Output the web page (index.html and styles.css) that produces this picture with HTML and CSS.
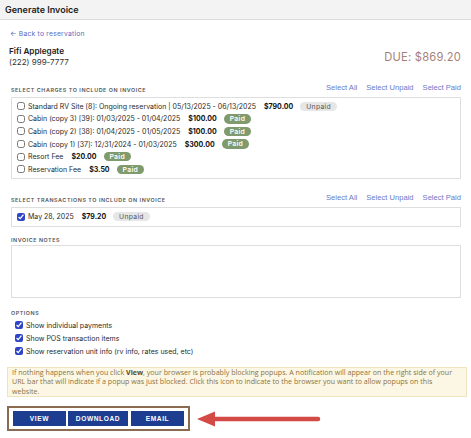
FILE: index.html
```html
<!DOCTYPE html>
<html lang="en">
<head>
  <meta charset="UTF-8">
  <title>Generate Invoice</title>
  <link rel="stylesheet" href="styles.css">
</head>
<body>

  <div class="topbar">Generate Invoice</div>

  <div class="page">
    <a class="back-link" href="#">&#8592; Back to reservation</a>

    <div class="guest-row">
      <div class="guest">
        <div class="guest-name">Fifi Applegate</div>
        <div class="guest-phone">(222) 999-7777</div>
      </div>
      <div class="due">DUE: $869.20</div>
    </div>

    <div class="section-head charges-head">
      <span class="section-label">Select charges to include on invoice</span>
      <span class="select-links"><a href="#">Select All</a><a href="#">Select Unpaid</a><a href="#">Select Paid</a></span>
    </div>
    <div class="item-box">
      <label class="item"><input type="checkbox"> Standard RV Site [8]: Ongoing reservation | 05/13/2025 - 06/13/2025 <b>$790.00</b> <span class="badge unpaid">Unpaid</span></label>
      <label class="item"><input type="checkbox"> Cabin (copy 3) [39]: 01/03/2025 - 01/04/2025 <b>$100.00</b> <span class="badge paid">Paid</span></label>
      <label class="item"><input type="checkbox"> Cabin (copy 2) [38]: 01/04/2025 - 01/05/2025 <b>$100.00</b> <span class="badge paid">Paid</span></label>
      <label class="item"><input type="checkbox"> Cabin (copy 1) [37]: 12/31/2024 - 01/03/2025 <b>$300.00</b> <span class="badge paid">Paid</span></label>
      <label class="item"><input type="checkbox"> Resort Fee <b>$20.00</b> <span class="badge paid">Paid</span></label>
      <label class="item"><input type="checkbox"> Reservation Fee <b>$3.50</b> <span class="badge paid">Paid</span></label>
    </div>

    <div class="section-head trans-head">
      <span class="section-label">Select transactions to include on invoice</span>
      <span class="select-links"><a href="#">Select All</a><a href="#">Select Unpaid</a><a href="#">Select Paid</a></span>
    </div>
    <div class="item-box trans-box">
      <label class="item"><input type="checkbox" checked> May 28, 2025 <b>$79.20</b> <span class="badge unpaid">Unpaid</span></label>
    </div>

    <div class="section-label notes-label">Invoice notes</div>
    <textarea class="notes"></textarea>

    <div class="section-label options-label">Options</div>
    <div class="options">
      <label class="item"><input type="checkbox" checked> Show individual payments</label>
      <label class="item"><input type="checkbox" checked> Show POS transaction items</label>
      <label class="item"><input type="checkbox" checked> Show reservation unit info (rv info, rates used, etc)</label>
    </div>
  </div>

  <p class="notice">If nothing happens when you click <strong>View</strong>, your browser is probably blocking popups. A notification will appear on the right side of your URL bar that will indicate if a popup was just blocked. Click this icon to indicate to the browser you want to allow popups on this website.</p>

  <div class="actions">
    <div class="btn-frame">
      <button class="btn btn-view">View</button>
      <button class="btn btn-download">Download</button>
      <button class="btn btn-email">Email</button>
    </div>
    <svg class="arrow" width="126" height="16" viewBox="0 0 126 16">
      <line x1="14" y1="8" x2="122" y2="8" stroke="#d44a47" stroke-width="4.5" stroke-linecap="round"/>
      <polygon points="1,8 19,0.5 19,15.5" fill="#d44a47"/>
    </svg>
  </div>

</body>
</html>
```

FILE: styles.css
```css
body {
  margin: 0;
  font-family: Inter, "Liberation Sans", sans-serif;
  color: #222;
  background: white;
}

.topbar {
  height: 19px;
  line-height: 19px;
  padding-left: 5px;
  background: #f3f3f3;
  border-bottom: 1px solid #dcdcdc;
  font-size: 9px;
  font-weight: 600;
  color: #222;
}

.page {
  padding: 0 10px 0 11px;
}

.back-link {
  display: block;
  margin-top: 9px;
  margin-left: -1px;
  font-size: 6.8px;
  line-height: 9px;
  color: #5b6cc0;
  text-decoration: none;
  letter-spacing: 0.2px;
}

.guest-row {
  display: flex;
  justify-content: space-between;
  align-items: flex-start;
  margin-top: 8px;
  margin-left: -2px;
}

.guest-name {
  font-size: 8.2px;
  font-weight: 600;
  line-height: 11px;
}

.guest-phone {
  font-size: 8px;
  line-height: 11px;
  color: #333;
}

.due {
  margin-top: 4px;
  font-size: 11.2px;
  color: #a87f77;
  letter-spacing: 0.2px;
}

.section-head {
  display: flex;
  justify-content: space-between;
  align-items: flex-end;
  height: 10px;
}

.charges-head {
  margin-top: 16px;
}

.trans-head {
  margin-top: 15px;
}

.section-label {
  font-size: 5.4px;
  font-weight: 600;
  letter-spacing: 0.55px;
  text-transform: uppercase;
  color: #555;
  line-height: 8px;
}

.select-links a {
  margin-left: 9px;
  font-family: "Liberation Sans", Arial, sans-serif;
  font-size: 7.6px;
  color: #6b79c7;
  text-decoration: none;
}

.item-box {
  margin-top: 3px;
  padding: 2px 4px 2px 5px;
  border: 1px solid #dedede;
}

.item {
  display: flex;
  align-items: center;
  gap: 2px;
  height: 12.6px;
  font-size: 7px;
  color: #2a2a2a;
  white-space: nowrap;
}

.item b {
  margin-left: 6px;
  margin-right: 5px;
  color: #111;
}

.item input {
  width: 8px;
  height: 8px;
  margin: 0 1px 0 0;
  accent-color: #2f45c8;
}

.badge {
  padding: 0 6px;
  border-radius: 6px;
  font-size: 6.8px;
  line-height: 9.5px;
  letter-spacing: 0.3px;
}

.badge.paid {
  background: #7f9a6c;
  color: white;
  font-weight: 600;
}

.badge.unpaid {
  background: #e6e6e6;
  color: #555;
}

.trans-box {
  padding-top: 2px;
  padding-bottom: 2px;
}

.trans-box .item {
  height: 14px;
}

.notes-label {
  margin-top: 9px;
}

.notes {
  display: block;
  box-sizing: border-box;
  width: 100%;
  height: 53px;
  margin-top: 1px;
  border: 1px solid #dedede;
  border-radius: 0;
  resize: none;
}

.options-label {
  margin-top: 11px;
}

.options {
  margin-top: 2px;
  padding-left: 4px;
}

.options .item {
  height: 13px;
}

.notice {
  margin: 9px 4px 0 7px;
  padding: 0 8px 0 4px;
  background: #fcf7e4;
  border: 1px solid #efe4bd;
  font-family: "Open Sans", "Noto Sans", sans-serif;
  font-size: 7.1px;
  line-height: 9.6px;
  color: #8c7340;
}

.notice strong {
  color: #5a4a20;
}

.actions {
  display: flex;
  align-items: center;
  margin: 9px 0 0 7px;
}

.btn-frame {
  display: flex;
  gap: 2px;
  padding: 3px 4px;
  border: 2px solid #8b6b4f;
}

.btn {
  height: 15px;
  padding: 0;
  border: none;
  background: #1d3d91;
  color: white;
  font-family: "Liberation Sans", Arial, sans-serif;
  font-size: 6.6px;
  font-weight: bold;
  letter-spacing: 0.6px;
  text-transform: uppercase;
}

.btn-view {
  width: 53px;
}

.btn-download {
  width: 60px;
  margin-right: 1px;
}

.btn-email {
  width: 53px;
}

.arrow {
  margin-left: 6px;
}
```
